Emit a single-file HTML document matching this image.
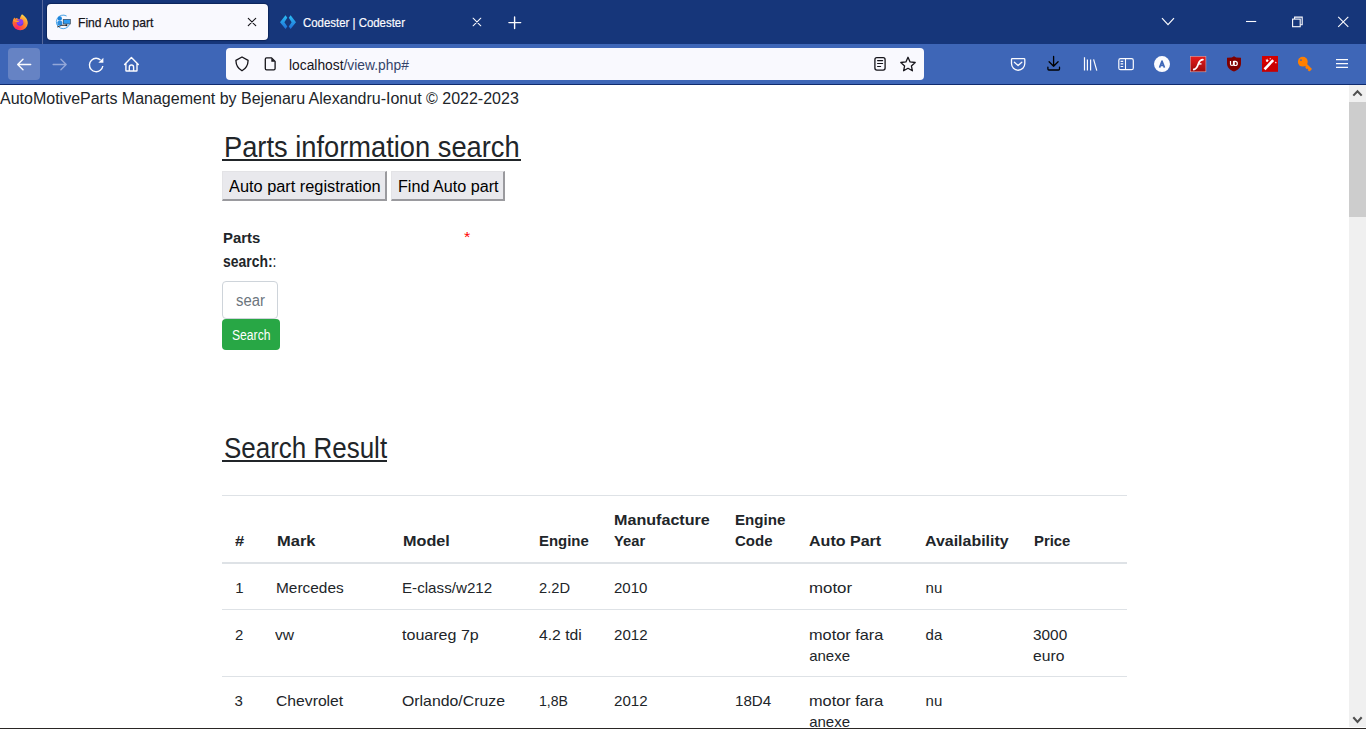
<!DOCTYPE html>
<html><head><meta charset="utf-8"><style>
*{box-sizing:border-box;}
html,body{margin:0;padding:0;}
body{width:1366px;height:729px;overflow:hidden;position:relative;background:#fff;font-family:"Liberation Sans",sans-serif;}
.t{position:absolute;white-space:nowrap;transform-origin:0 0;}
.r{position:absolute;}
svg{position:absolute;overflow:visible;}
.btn{background:#e9e9ed;border-style:solid;border-width:1px 2px 2px 1px;border-color:#e3e3e6 #9a9a9e #9a9a9e #e3e3e6;}
</style></head><body>
<div class="r" style="left:0px;top:0px;width:1366px;height:44px;background:#16367a;"></div>
<div class="r" style="left:42px;top:0px;width:1px;height:44px;background:#56689c;"></div>
<div class="r" style="left:47px;top:4px;width:221px;height:36px;background:#f9f9fe;border-radius:4px;box-shadow:0 0 1px 1px rgba(0,20,60,.5);"></div>
<div class="t" style="left:77.50px;top:15px;font-size:13px;line-height:15px;color:#15141a;transform:scaleX(0.9316);-webkit-text-stroke:0.25px #15141a;">Find Auto part</div>
<div class="t" style="left:302.90px;top:15px;font-size:13px;line-height:15px;color:#fbfbfe;transform:scaleX(0.8785);-webkit-text-stroke:0.2px #fbfbfe;">Codester | Codester</div>
<div class="r" style="left:0px;top:44px;width:1366px;height:40px;background:#3e66b7;"></div>
<div class="r" style="left:0px;top:84px;width:1366px;height:1px;background:#0f2b6e;"></div>
<div class="r" style="left:8px;top:48px;width:32px;height:32px;background:#6683c4;border-radius:4px;"></div>
<div class="r" style="left:226px;top:48px;width:698px;height:32px;background:#f9f9fe;border-radius:4px;"></div>
<div class="t" style="left:288.80px;top:57px;font-size:14px;line-height:16px;color:#15141a;transform:scaleX(0.9868);">localhost<span style="color:#34446a">/view.php#</span></div>
<svg style="left:0px;top:0px;" width="1366" height="85" viewBox="0 0 1366 85">
<defs>
 <radialGradient id="ffg" cx="0.3" cy="0.9" r="1.0">
  <stop offset="0" stop-color="#ff1f6b"/><stop offset="0.45" stop-color="#ff6a2b"/><stop offset="0.8" stop-color="#ffb33a"/><stop offset="1" stop-color="#fff25a"/>
 </radialGradient>
 <linearGradient id="cdg" x1="0" y1="0" x2="0" y2="1"><stop offset="0" stop-color="#2bc0f5"/><stop offset="1" stop-color="#1f6fd8"/></linearGradient>
 <linearGradient id="flg" x1="0" y1="0" x2="0" y2="1"><stop offset="0" stop-color="#e81c1c"/><stop offset="1" stop-color="#9c0b0b"/></linearGradient>
</defs>
<!-- firefox -->
<g>
 <path d="M22 14.2 C24.5 16 27.8 18.6 27.8 23.2 A7.7 7.7 0 0 1 12.5 23.6 C12.5 21 13.2 19.2 14.4 17.4 L15.3 18.8 L16.6 18 C17.6 18.6 18.5 19.2 19.5 19.6 C20.2 17.6 20.6 15.8 22 14.2 Z" fill="url(#ffg)"/>
 <circle cx="20" cy="22.4" r="3.3" fill="#8b3cf0"/>
 <path d="M17.2 22.8 A3.3 3.3 0 0 0 23.3 22.6 A3 3 0 0 1 17.2 22.8Z" fill="#5b3fe0"/>
 <path d="M13.6 19.5 C15.5 20.5 17.8 21.2 19.8 20.6 L18.4 22 C16.4 22.3 14.6 21.6 13.4 20.8Z" fill="#ffa12a"/>
</g>
<!-- favicon tab1 -->
<g>
 <path d="M69.6 24.2 A6.8 6.8 0 1 1 66.6 16" fill="none" stroke="#4aa3e6" stroke-width="1"/>
 <circle cx="59.8" cy="18.5" r="2.2" fill="#1b84dc"/>
 <path d="M57.4 22.3 Q57.4 21 58.7 21 H61 Q62.2 21 62.2 22.3 V25.4 H57.4 Z" fill="#2a8fe2"/>
 <rect x="62.9" y="19" width="7.9" height="5.3" fill="#4b5563"/>
 <rect x="63.6" y="19.7" width="6.5" height="3.9" fill="#2f9bf0"/>
 <path d="M57.2 27 Q61.5 24.6 66.6 25.2" stroke="#333" stroke-width="1" fill="none"/>
 <circle cx="66.4" cy="25.3" r="1" fill="#222"/>
</g>
<!-- tab close X -->
<path d="M248.3 18.3 L255.7 25.7 M255.7 18.3 L248.3 25.7" stroke="#15141a" stroke-width="1.15" stroke-linecap="round"/>
<!-- codester icon -->
<path d="M280 22.15 L285.5 15.15 L287.3 17.8 L284.4 22.15 L287.3 26.5 L285.5 28.9 Z M296 22.15 L290.6 15.15 L288.8 17.8 L291.6 22.15 L288.8 26.5 L290.6 28.9 Z" fill="url(#cdg)"/>
<path d="M473.1 18.2 L480.8 25.8 M480.8 18.2 L473.1 25.8" stroke="#fbfbfe" stroke-width="1.05" stroke-linecap="round"/>
<path d="M508.9 22.6 H520.7 M514.6 16.9 V28.5" stroke="#fbfbfe" stroke-width="1.4" stroke-linecap="round"/>
<!-- window controls -->
<path d="M1162 18.2 L1168 24.6 L1174 18.2" stroke="#fbfbfe" stroke-width="1.2" fill="none"/>
<path d="M1246 21.5 H1256.2" stroke="#fbfbfe" stroke-width="1.1"/>
<rect x="1292.6" y="19.1" width="7.6" height="7.6" fill="none" stroke="#fbfbfe" stroke-width="1.1"/>
<path d="M1294.6 19.1 V17.1 H1302.2 V24.7 H1300.2" fill="none" stroke="#fbfbfe" stroke-width="1.1"/>
<path d="M1338.2 16.8 L1348.3 26.9 M1348.3 16.8 L1338.2 26.9" stroke="#fbfbfe" stroke-width="1.1"/>
<!-- back / forward -->
<path d="M30.7 64.5 H17.8 M23 59.2 L17.7 64.5 L23 69.8" stroke="#fbfbfe" stroke-width="1.4" stroke-linecap="round" stroke-linejoin="round" fill="none"/>
<path d="M53.1 64.5 H66.2 M60.9 59.2 L66.2 64.5 L60.9 69.8" stroke="#93a7d8" stroke-width="1.3" stroke-linecap="round" stroke-linejoin="round" fill="none"/>
<!-- reload -->
<path d="M102.8 66 A6.7 6.7 0 1 1 96.1 58.3 A6.7 6.7 0 0 1 100.5 60" stroke="#fbfbfe" stroke-width="1.4" fill="none"/>
<path d="M98.3 62.8 L103.4 62.8 L103.4 57.7 Z" fill="#fbfbfe"/>
<!-- home -->
<path d="M124.6 64.6 L131.4 57.6 L138.3 64.6 M125.9 63.4 V70.4 Q125.9 71 126.5 71 H136.4 Q137 71 137 70.4 V63.4 M129.3 71 V67.2 A2.1 2.1 0 0 1 133.6 67.2 V71" stroke="#fbfbfe" stroke-width="1.4" stroke-linejoin="round" stroke-linecap="round" fill="none"/>
<!-- shield -->
<path d="M242 57 L235.9 60.4 C236 65 238 68.4 242 70.8 C246 68.4 248 65 248.1 60.4 Z" stroke="#15141a" stroke-width="1.3" stroke-linejoin="round" fill="none"/>
<!-- page icon -->
<path d="M266.6 57.9 H271.6 L275.1 61.4 V68.6 Q275.1 69.9 273.8 69.9 H266.6 Q265.3 69.9 265.3 68.6 V59.2 Q265.3 57.9 266.6 57.9 Z" stroke="#15141a" stroke-width="1.3" stroke-linejoin="round" fill="none"/>
<path d="M271.3 57.9 V61.7 H275.1 Z" fill="#15141a"/>
<!-- reader -->
<rect x="874.9" y="57.7" width="10.2" height="12.4" rx="2" stroke="#15141a" stroke-width="1.3" fill="none"/>
<path d="M877.6 60.6 H882.6 M877.6 63.5 H882.6 M877.6 66.5 H880.6" stroke="#15141a" stroke-width="1.2" stroke-linecap="round"/>
<!-- star -->
<path d="M908 57.3 L910.1 61.9 L915.2 62.5 L911.4 65.9 L912.4 70.8 L908 68.3 L903.6 70.8 L904.6 65.9 L900.8 62.5 L905.9 61.9 Z" stroke="#15141a" stroke-width="1.3" stroke-linejoin="round" fill="none"/>
<!-- pocket -->
<path d="M1012.3 58.7 H1024 Q1024.8 58.7 1024.8 59.5 V63.6 A6.65 6.65 0 0 1 1011.5 63.6 V59.5 Q1011.5 58.7 1012.3 58.7 Z" stroke="#fbfbfe" stroke-width="1.3" fill="none"/>
<path d="M1014.4 62.3 L1018.1 65.6 L1021.8 62.3" stroke="#fbfbfe" stroke-width="1.3" stroke-linecap="round" stroke-linejoin="round" fill="none"/>
<!-- download -->
<path d="M1053.6 56.4 V66.3 M1049.1 61.7 L1053.6 66.2 L1058.1 61.7 M1047.9 67.2 V69 Q1047.9 70 1048.9 70 H1058.5 Q1059.5 70 1059.5 69 V67.2" stroke="#000" stroke-width="1.3" stroke-linecap="round" stroke-linejoin="round" fill="none"/>
<!-- library -->
<path d="M1084.5 57.2 V70.6 M1087.4 59.4 V70.6 M1090.6 59.4 V70.6 M1093.6 59.4 L1096.8 70.6" stroke="#fbfbfe" stroke-width="1.2" fill="none"/>
<!-- sidebar -->
<rect x="1118.8" y="58.7" width="14.5" height="11" rx="1.8" stroke="#fbfbfe" stroke-width="1.2" fill="none"/>
<path d="M1125.5 58.7 V69.7 M1120.6 61.4 H1123.2 M1120.6 63.9 H1123.2 M1120.6 66.5 H1123.2" stroke="#fbfbfe" stroke-width="1.1" fill="none"/>
<!-- A circle -->
<circle cx="1162" cy="64.1" r="8" fill="#fbfbfe"/>
<path d="M1159.5 67.6 L1162 61.1 L1164.5 67.6 M1160.4 65.4 H1163.6" stroke="#3e66b7" stroke-width="1.6" fill="none" stroke-linejoin="round"/>
<!-- flash -->
<rect x="1190.3" y="56.3" width="15.6" height="15.5" fill="url(#flg)" stroke="#d9a5a5" stroke-width="0.6"/>
<path d="M1193.8 69.5 C1196.8 69 1197.7 65.8 1198.6 63.2 C1199.5 60.9 1200.6 59.9 1202.9 59.7" stroke="#fff" stroke-width="1.8" fill="none" stroke-linecap="round"/>
<path d="M1198.3 63.9 H1201.5" stroke="#fff" stroke-width="1.4"/>
<!-- uBlock -->
<path d="M1234 56.2 L1236.2 57.6 L1241 57.8 V63.5 C1241 67.4 1237.8 70.2 1234 71.5 C1230.2 70.2 1227 67.4 1227 63.5 V57.8 L1231.8 57.6 Z" fill="#800000"/>
<path d="M1230.5 61 V64 Q1230.5 65.5 1232 65.5 Q1233.5 65.5 1233.5 64 V61 M1234.2 61.3 V65.5 H1235.2 A2.1 2.1 0 0 0 1235.2 61.3 Z" stroke="#fff" stroke-width="1.2" fill="none"/>
<!-- wand -->
<rect x="1262" y="56" width="16" height="15.8" fill="#c80000"/>
<rect x="1262" y="56" width="16" height="8" fill="#d40000"/>
<path d="M1265.4 68.3 L1272.3 61" stroke="#fff" stroke-width="2.6" stroke-linecap="square"/>
<path d="M1266.5 59.8 l0.8 -1.2 l0.4 1.3 l1.3 0.2 l-1.1 0.8 l0.2 1.3 l-1 -0.8 l-1.2 0.5 l0.4 -1.2 l-0.9 -1 z M1275.5 62.2 l0.4 -0.8 l0.3 0.8 l0.8 0.2 l-0.7 0.4 l0 0.8 l-0.5 -0.5 l-0.8 0.3 l0.3 -0.7 l-0.5 -0.6 z M1270.2 57.8 l0.3 0.6 l0.6 0.1 l-0.5 0.4 l0.1 0.6 l-0.5 -0.3 l-0.5 0.3 l0.1 -0.6 l-0.5 -0.4 l0.6 -0.1 z" fill="#fff"/>
<!-- key -->
<circle cx="1302.8" cy="61.7" r="4.9" fill="#ff7f00"/>
<path d="M1304.5 63.6 L1311 70.1" stroke="#ff7f00" stroke-width="2.8"/>
<path d="M1305.2 67.6 l1.3 -1.3 l1.6 1.6 l-1.3 1.3z M1307.6 70 l1.3 -1.3 l1.6 1.6 l-1.3 1.3z" fill="#ff7f00"/>
<circle cx="1301" cy="60.1" r="0.95" fill="#3e66b7"/>
<!-- hamburger -->
<path d="M1336 59.55 H1348 M1336 63.55 H1348 M1336 67.45 H1348" stroke="#fbfbfe" stroke-width="1.3"/>
</svg>
<div class="t" style="left:0.00px;top:90px;font-size:16px;line-height:17px;color:#212529;">AutoMotiveParts Management by Bejenaru Alexandru-Ionut © 2022-2023</div>
<div class="t" style="left:224.25px;top:131px;font-size:29px;line-height:32px;color:#212529;transform:scaleX(0.9407);">Parts information search</div>
<div class="r" style="left:222px;top:159px;width:299px;height:2px;background:#212529;"></div>
<div class="r btn" style="left:222px;top:171px;width:165px;height:30px;"></div>
<div class="r btn" style="left:391px;top:171px;width:114px;height:30px;"></div>
<div class="t" style="left:228.50px;top:178px;font-size:16px;line-height:17px;color:#000;transform:scaleX(1.0207);">Auto part registration</div>
<div class="t" style="left:397.90px;top:178px;font-size:16px;line-height:17px;color:#000;transform:scaleX(1.0099);">Find Auto part</div>
<div class="t" style="left:222.90px;top:229px;font-size:15.5px;line-height:17px;color:#212529;font-weight:bold;transform:scaleX(0.9622);">Parts</div>
<div class="t" style="left:222.70px;top:253px;font-size:16px;line-height:17px;color:#212529;font-weight:bold;transform:scaleX(0.8706);">search:<span style='font-weight:normal'>:</span></div>
<div class="t" style="left:464.00px;top:229px;font-size:14px;line-height:16px;color:#ff0000;transform:scaleX(1.1568);">*</div>
<div class="r" style="left:222px;top:281px;width:56px;height:38px;background:#fff;border:1px solid #ced4da;border-radius:4px;"></div>
<div class="t" style="left:235.80px;top:292px;font-size:16px;line-height:17px;color:#6c757d;transform:scaleX(0.9287);">sear</div>
<div class="r" style="left:222px;top:319px;width:58px;height:31px;background:#28a745;border-radius:4px;"></div>
<div class="t" style="left:231.70px;top:327px;font-size:14px;line-height:16px;color:#fff;transform:scaleX(0.8681);">Search</div>
<div class="t" style="left:223.60px;top:432px;font-size:29px;line-height:32px;color:#212529;transform:scaleX(0.8954);">Search Result</div>
<div class="r" style="left:222px;top:460px;width:165px;height:2px;background:#212529;"></div>
<div class="r" style="left:222px;top:495px;width:905px;height:1px;background:#dee2e6;"></div>
<div class="r" style="left:222px;top:562px;width:905px;height:2px;background:#dee2e6;"></div>
<div class="r" style="left:222px;top:609px;width:905px;height:1px;background:#dee2e6;"></div>
<div class="r" style="left:222px;top:676px;width:905px;height:1px;background:#dee2e6;"></div>
<div class="t" style="left:234.60px;top:532px;font-size:15.5px;line-height:17px;color:#212529;font-weight:bold;transform:scaleX(1.0675);">#</div>
<div class="t" style="left:276.50px;top:532px;font-size:15.5px;line-height:17px;color:#212529;font-weight:bold;transform:scaleX(1.0633);">Mark</div>
<div class="t" style="left:402.50px;top:532px;font-size:15.5px;line-height:17px;color:#212529;font-weight:bold;transform:scaleX(1.0451);">Model</div>
<div class="t" style="left:539.30px;top:532px;font-size:15.5px;line-height:17px;color:#212529;font-weight:bold;transform:scaleX(0.9637);">Engine</div>
<div class="t" style="left:614.00px;top:511px;font-size:15.5px;line-height:17px;color:#212529;font-weight:bold;transform:scaleX(1.0396);">Manufacture</div>
<div class="t" style="left:614.00px;top:532px;font-size:15.5px;line-height:17px;color:#212529;font-weight:bold;transform:scaleX(0.9496);">Year</div>
<div class="t" style="left:734.80px;top:511px;font-size:15.5px;line-height:17px;color:#212529;font-weight:bold;transform:scaleX(0.9753);">Engine</div>
<div class="t" style="left:734.80px;top:532px;font-size:15.5px;line-height:17px;color:#212529;font-weight:bold;transform:scaleX(0.9677);">Code</div>
<div class="t" style="left:809.20px;top:532px;font-size:15.5px;line-height:17px;color:#212529;font-weight:bold;transform:scaleX(1.0351);">Auto Part</div>
<div class="t" style="left:925.40px;top:532px;font-size:15.5px;line-height:17px;color:#212529;font-weight:bold;transform:scaleX(1.0287);">Availability</div>
<div class="t" style="left:1033.70px;top:532px;font-size:15.5px;line-height:17px;color:#212529;font-weight:bold;transform:scaleX(0.9575);">Price</div>
<div class="t" style="left:235.20px;top:579px;font-size:15px;line-height:17px;color:#212529;">1</div>
<div class="t" style="left:276.20px;top:579px;font-size:15px;line-height:17px;color:#212529;transform:scaleX(1.0279);">Mercedes</div>
<div class="t" style="left:402.30px;top:579px;font-size:15px;line-height:17px;color:#212529;transform:scaleX(1.0112);">E-class/w212</div>
<div class="t" style="left:539.10px;top:579px;font-size:15px;line-height:17px;color:#212529;transform:scaleX(0.9785);">2.2D</div>
<div class="t" style="left:613.90px;top:579px;font-size:15px;line-height:17px;color:#212529;transform:scaleX(1.0037);">2010</div>
<div class="t" style="left:809.20px;top:579px;font-size:15px;line-height:17px;color:#212529;transform:scaleX(1.1242);">motor</div>
<div class="t" style="left:925.60px;top:579px;font-size:15px;line-height:17px;color:#212529;">nu</div>
<div class="t" style="left:234.60px;top:626px;font-size:15px;line-height:17px;color:#212529;transform:scaleX(0.9952);">2</div>
<div class="t" style="left:275.20px;top:626px;font-size:15px;line-height:17px;color:#212529;transform:scaleX(1.0395);">vw</div>
<div class="t" style="left:402.20px;top:626px;font-size:15px;line-height:17px;color:#212529;transform:scaleX(1.0707);">touareg 7p</div>
<div class="t" style="left:538.80px;top:626px;font-size:15px;line-height:17px;color:#212529;transform:scaleX(1.0475);">4.2 tdi</div>
<div class="t" style="left:613.90px;top:626px;font-size:15px;line-height:17px;color:#212529;transform:scaleX(1.0067);">2012</div>
<div class="t" style="left:809.20px;top:626px;font-size:15px;line-height:17px;color:#212529;transform:scaleX(1.0867);">motor fara</div>
<div class="t" style="left:925.60px;top:626px;font-size:15px;line-height:17px;color:#212529;">da</div>
<div class="t" style="left:1033.30px;top:626px;font-size:15px;line-height:17px;color:#212529;transform:scaleX(1.0247);">3000</div>
<div class="t" style="left:809.20px;top:647px;font-size:15px;line-height:17px;color:#212529;">anexe</div>
<div class="t" style="left:1033.30px;top:647px;font-size:15px;line-height:17px;color:#212529;transform:scaleX(1.0461);">euro</div>
<div class="t" style="left:234.60px;top:692px;font-size:15px;line-height:17px;color:#212529;">3</div>
<div class="t" style="left:275.70px;top:692px;font-size:15px;line-height:17px;color:#212529;transform:scaleX(1.0467);">Chevrolet</div>
<div class="t" style="left:402.20px;top:692px;font-size:15px;line-height:17px;color:#212529;transform:scaleX(1.0559);">Orlando/Cruze</div>
<div class="t" style="left:538.80px;top:692px;font-size:15px;line-height:17px;color:#212529;transform:scaleX(0.9399);">1,8B</div>
<div class="t" style="left:613.90px;top:692px;font-size:15px;line-height:17px;color:#212529;transform:scaleX(1.0067);">2012</div>
<div class="t" style="left:734.70px;top:692px;font-size:15px;line-height:17px;color:#212529;transform:scaleX(1.0093);">18D4</div>
<div class="t" style="left:809.20px;top:692px;font-size:15px;line-height:17px;color:#212529;transform:scaleX(1.0867);">motor fara</div>
<div class="t" style="left:925.60px;top:692px;font-size:15px;line-height:17px;color:#212529;">nu</div>
<div class="t" style="left:809.20px;top:713px;font-size:15px;line-height:17px;color:#212529;">anexe</div>
<div class="r" style="left:1349px;top:85px;width:17px;height:642px;background:#f0f0f0;"></div>
<div class="r" style="left:1349px;top:102px;width:17px;height:115px;background:#cdcdcd;"></div>
<svg style="left:1349px;top:85px;" width="17" height="643" viewBox="0 0 17 643"><path d="M4.3 10.6 L8.5 6.2 L12.7 10.6" stroke="#505050" stroke-width="2.1" fill="none"/><path d="M4.3 632.3 L8.5 636.9 L12.7 632.3" stroke="#505050" stroke-width="2.1" fill="none"/></svg>
<div class="r" style="left:0px;top:728px;width:1366px;height:1px;background:#2a2624;"></div>
</body></html>
